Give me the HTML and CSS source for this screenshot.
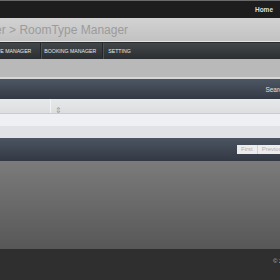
FILE: index.html
```html
<!DOCTYPE html>
<html lang="en">
<head>
  <meta charset="UTF-8" />
  <title>RoomType Manager</title>
  <link rel="stylesheet" href="styles.css">
</head>
<body>
  <div class="topbar">
    <a class="toplink" href="#">Home</a>
  </div>

  <div class="header">
    <h1 class="title">Hotel Manager &gt; RoomType Manager</h1>
  </div>

  <div class="nav">
    <a class="nav-item first" href="#">ROOMTYPE MANAGER</a>
    <a class="nav-item" href="#">BOOKING MANAGER</a>
    <a class="nav-item last" href="#">SETTING</a>
  </div>

  <div class="content">
    <div class="grid">
      <div class="grid-top">
        <span class="search">Search</span>
      </div>
      <div class="grid-head">
        <div class="col col-a"></div>
        <div class="col col-b"><span class="sort">&#8661;</span></div>
      </div>
      <div class="grid-row odd"></div>
      <div class="grid-row even"></div>
      <div class="grid-bottom">
        <span class="pager-btn">First</span>
        <span class="pager-btn">Previous</span>
      </div>
    </div>
  </div>

  <div class="main"></div>

  <div class="footer">
    <span class="copy">&copy; 2012</span>
  </div>
</body>
</html>
```

FILE: styles.css
```css
body {
  margin: 0;
  width: 280px;
  overflow: hidden;
  font-family: 'Liberation Sans', Arial, sans-serif;
  background: #2f2f2f;
}
a {
  text-decoration: none;
}
.topbar {
  height: 17px;
  background: #1d1d1d;
  border-top: 1px solid #6a6a6a;
  display: flex;
  justify-content: flex-end;
  align-items: center;
  padding-right: 7px;
}
.toplink {
  color: #dedede;
  font-size: 6.5px;
  font-weight: bold;
}
.header {
  height: 23px;
  background: linear-gradient(#d2d2d2, #c2c2c2);
  border-bottom: 1px solid #e4e4e4;
  display: flex;
  align-items: center;
  white-space: nowrap;
  overflow: hidden;
}
.title {
  margin: 0 0 0 -73px;
  font-size: 12px;
  font-weight: normal;
  color: #9b9b9b;
  flex-shrink: 0;
}
.nav {
  height: 16px;
  background: linear-gradient(#42474a, #2b2f31);
  border-top: 1px solid #2a2d2f;
  display: flex;
  align-items: center;
  white-space: nowrap;
  overflow: hidden;
}
.nav-item {
  color: #e8e8e8;
  font-size: 5.2px;
  padding: 0 6px 0 3px;
  height: 16px;
  line-height: 16px;
  border-right: 1px solid #25282a;
  box-shadow: 1px 0 0 #4d5255;
  flex-shrink: 0;
}
.nav-item.first {
  margin-left: -26px;
  padding-left: 0;
  padding-right: 9px;
}
.nav-item.last {
  border-right: none;
  box-shadow: none;
  padding-left: 5px;
}
.content {
  background: #b9b9b9;
  padding-top: 18px;
}
.grid {
  border-top: 2px solid #d6d6d6;
}
.grid-top {
  height: 20px;
  background: linear-gradient(#4d5664, #343a44);
  display: flex;
  justify-content: flex-end;
  align-items: center;
  white-space: nowrap;
  overflow: hidden;
}
.search {
  color: #dfe2e6;
  font-size: 6.5px;
  margin-right: -6px;
}
.grid-head {
  height: 14px;
  background: linear-gradient(#e6e8ea, #dcdee0);
  border-bottom: 1px solid #c9cbce;
  display: flex;
}
.col {
  height: 14px;
}
.col-a {
  width: 50px;
  border-right: 1px solid #f2f3f4;
}
.col-b {
  flex: 1;
  padding-left: 4px;
}
.sort {
  color: #9a9c9e;
  font-size: 8px;
  line-height: 14px;
}
.grid-row {
  height: 12px;
}
.grid-row.odd {
  background: #eef0f3;
}
.grid-row.even {
  background: #e0e2e5;
}
.grid-bottom {
  height: 23px;
  background: linear-gradient(#4b5462, #333943);
  display: flex;
  justify-content: flex-start;
  align-items: center;
  padding-left: 237px;
  white-space: nowrap;
  overflow: hidden;
}
.pager-btn {
  background: #ececec;
  color: #b0b0b0;
  font-size: 6px;
  height: 9px;
  line-height: 9px;
  padding: 0 4px;
  border-right: 1px solid #d0d0d0;
  flex-shrink: 0;
}
.main {
  height: 88px;
  background: linear-gradient(#7b7b7b, #575757);
}
.footer {
  height: 32px;
  background: #2f2f2f;
  white-space: nowrap;
  overflow: hidden;
}
.copy {
  display: inline-block;
  margin: 6px 0 0 273px;
  color: #bdbdbd;
  font-size: 6px;
}
```
